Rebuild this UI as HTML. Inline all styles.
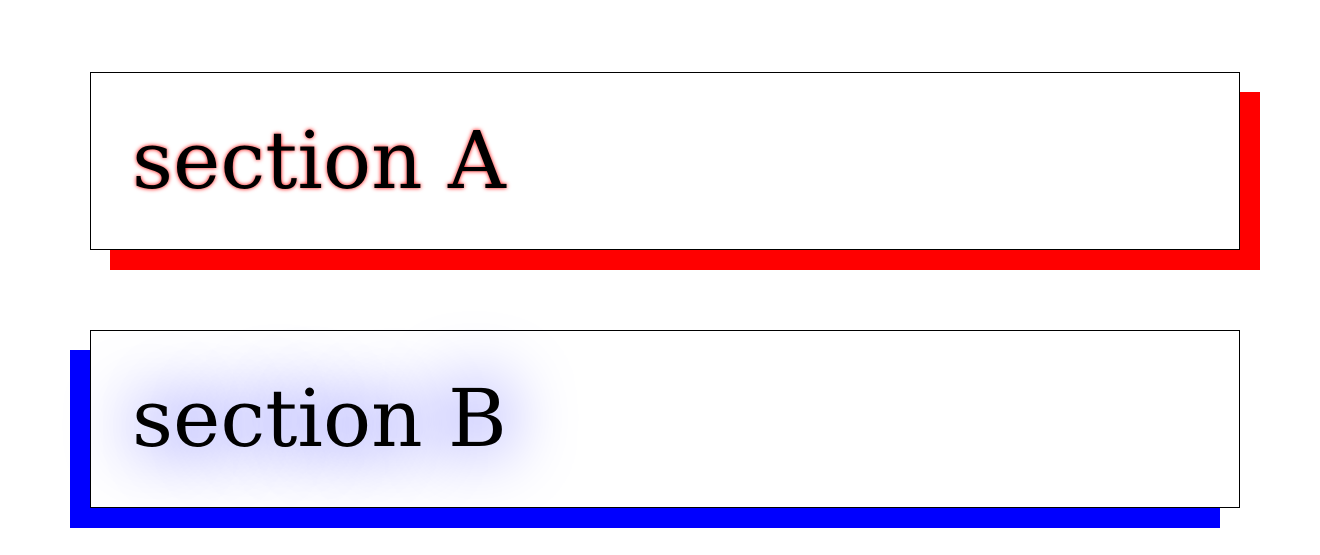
<!DOCTYPE html>
<html><head><style>
html,body{margin:0;padding:0;background:#fff;width:1320px;height:555px;overflow:hidden}
.box{position:absolute;left:90px;width:1148px;height:176px;border:1px solid #000;background:transparent}
.a{top:72px;box-shadow:20px 20px 0 #f00;background:#fff}
.b{top:330px;box-shadow:-20px 20px 0 #00f}
.t{position:absolute;left:41px;top:38px;font-family:"DejaVu Serif","Liberation Serif",serif;font-size:80px;line-height:100px;white-space:nowrap;color:#000}
.a .t{text-shadow:0 0 4px #f00}
.b .t{text-shadow:0 0 70px #00f}
</style></head><body>
<div class="box a"><div class="t">section A</div></div>
<div class="box b"><div class="t">section B</div></div>
</body></html>
